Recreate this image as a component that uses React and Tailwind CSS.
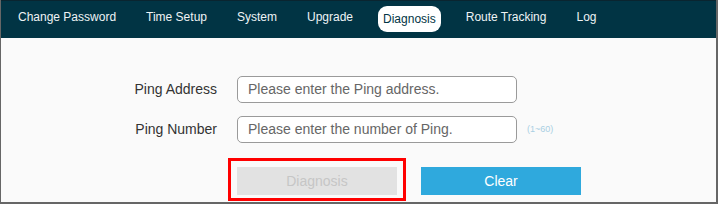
import React from "react";

const items = ["Change Password", "Time Setup", "System", "Upgrade", "Diagnosis", "Route Tracking", "Log"];

export default function App() {
  return (
    <div
      className="w-[718px] h-[204px] bg-[#fafafa] border-l border-r-2 border-b-2 border-[#666666] overflow-hidden"
      style={{ fontFamily: '"Liberation Sans", Arial, sans-serif' }}
    >
      <div className="h-[38px] bg-[#013444] border-t border-[#0a2530] flex items-start pl-[2px]">
        {items.map((it) =>
          it === "Diagnosis" ? (
            <div key={it} className="px-[10px] mt-[5px]">
              <div className="bg-white text-[#013444] rounded-[9px] px-[5px] py-[6px] text-[12px] leading-[14px]">
                {it}
              </div>
            </div>
          ) : (
            <div key={it} className="px-[15px] mt-[9px] text-[12px] leading-[14px] text-[#eef3f5]">
              {it}
            </div>
          )
        )}
      </div>
      <div className="pt-[38px] flex flex-col">
        <div className="flex items-center h-[27px]">
          <div className="w-[216px] text-right text-[14px] text-[#333333]">Ping Address</div>
          <div className="ml-[20px] w-[280px] h-[27px] border border-[#9a9a9a] rounded-[5px] bg-white flex items-center pl-[10px] text-[14px] text-[#666666]">
            Please enter the Ping address.
          </div>
        </div>
        <div className="flex items-center h-[27px] mt-[13px]">
          <div className="w-[216px] text-right text-[14px] text-[#333333]">Ping Number</div>
          <div className="ml-[20px] w-[280px] h-[27px] border border-[#9a9a9a] rounded-[5px] bg-white flex items-center pl-[10px] text-[14px] text-[#666666]">
            Please enter the number of Ping.
          </div>
          <div className="ml-[10px] text-[9px] text-[#a9cfe3]">(1~60)</div>
        </div>
        <div className="flex mt-[24px] ml-[236px] gap-[24px]">
          <div className="relative">
            <div className="w-[160px] h-[28px] bg-[#e2e2e2] text-[#c6c6c6] text-[14px] flex items-center justify-center">
              Diagnosis
            </div>
            <span className="absolute left-[-9px] top-[-9px] w-[178px] h-[43px] border-[3px] border-[#ff0000]"></span>
          </div>
          <div className="w-[160px] h-[28px] bg-[#2fa9dd] text-white text-[14px] flex items-center justify-center">
            Clear
          </div>
        </div>
      </div>
    </div>
  );
}
